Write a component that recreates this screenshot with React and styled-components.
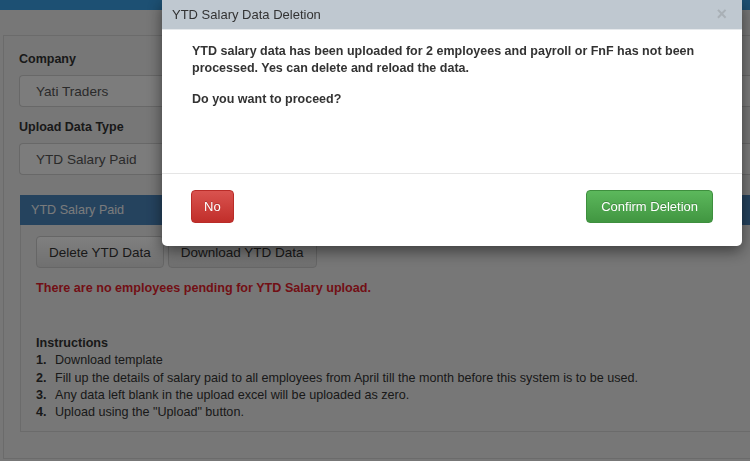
import styled, { createGlobalStyle } from 'styled-components';

const GlobalStyle = createGlobalStyle`
  html, body {
    margin: 0;
    padding: 0;
    height: 100%;
    overflow: hidden;
  }
  body {
    font-family: "Liberation Sans", Arial, sans-serif;
    font-size: 13px;
    color: #333;
    background: #efefef;
  }
`;

const TopBar = styled.div`
  height: 10px;
  background: #3aa0e6;
`;

const Page = styled.div`
  padding: 25px 0 0 3px;
`;

const Box = styled.div`
  border: 1px solid #d6d6d6;
  border-right: none;
  padding: 15px 0 26px 15px;
  display: flex;
  flex-direction: column;
`;

const Label = styled.label`
  font-weight: bold;
  font-size: 12.5px;
  line-height: 17px;
  margin-bottom: 7px;
`;

const Select = styled.div`
  box-sizing: border-box;
  height: 32px;
  border: 1px solid #d0d0d0;
  border-right: none;
  border-radius: 4px 0 0 4px;
  background: #f8f8f8;
  padding-left: 16px;
  display: flex;
  align-items: center;
  font-size: 13.6px;
  color: #555;
  margin-bottom: 12px;
`;

const Panel = styled.div`
  margin: 8px 0 0 1px;
  border: 1px solid #d6d6d6;
  border-right: none;
`;

const PanelHeading = styled.div`
  height: 30px;
  background: #4a86bd;
  color: #f4f6f8;
  font-size: 12.6px;
  display: flex;
  align-items: center;
  padding-left: 11px;
  margin: -1px 0 0 -1px;
`;

const PanelBody = styled.div`
  padding: 11px 15px 10px 15px;
`;

const ButtonRow = styled.div`
  display: flex;
  gap: 4px;
`;

const DefaultButton = styled.button`
  font-family: inherit;
  font-size: 13.5px;
  color: #333;
  height: 32px;
  padding: 0 12px;
  border: 1px solid #ccc;
  border-radius: 4px;
  background: linear-gradient(#ffffff, #e0e0e0);
`;

const ErrorText = styled.p`
  margin: 12px 0 0;
  color: #e41e2c;
  font-weight: bold;
  font-size: 12.6px;
  line-height: 17px;
`;

const Instructions = styled.div`
  margin-top: 38px;
  font-size: 12.6px;
  line-height: 17.3px;
`;

const InstructionsTitle = styled.div`
  font-weight: bold;
`;

const Step = styled.div`
  display: flex;
`;

const StepNum = styled.span`
  font-weight: bold;
  width: 19px;
`;

const Overlay = styled.div`
  position: fixed;
  inset: 0;
  background: rgba(0, 0, 0, 0.5);
`;

const Modal = styled.div`
  position: fixed;
  top: 0;
  left: 162px;
  width: 580px;
  background: #fff;
  border-radius: 0 0 5px 5px;
  box-shadow: 0 5px 15px rgba(0, 0, 0, 0.5);
  display: flex;
  flex-direction: column;
`;

const ModalHeader = styled.div`
  height: 29px;
  background: #bfc8d0;
  border-bottom: 1px solid #e6e9ec;
  display: flex;
  align-items: center;
  justify-content: space-between;
  padding: 0 15px 0 10px;
  font-size: 13px;
  color: #333;
`;

const Close = styled.span`
  font-size: 18px;
  font-weight: bold;
  color: #a9b0b6;
  line-height: 1;
  margin-top: -2px;
`;

const ModalBody = styled.div`
  height: 144px;
  padding: 13px 30px 0;
  font-weight: bold;
  font-size: 12.5px;
  line-height: 17px;
  box-sizing: border-box;
  border-bottom: 1px solid #e5e5e5;

  p {
    margin: 0 0 14px;
  }
`;

const ModalFooter = styled.div`
  display: flex;
  justify-content: space-between;
  padding: 16px 29px 23px;
`;

const ColorButton = styled.button`
  font-family: inherit;
  font-size: 13px;
  color: #fff;
  height: 33px;
  padding: 0 ${p => (p.$variant === 'danger' ? '12px' : '14px')};
  border-radius: 4px;
  border: 1px solid ${p => (p.$variant === 'danger' ? '#b92c28' : '#3e8f3e')};
  background: ${p =>
    p.$variant === 'danger'
      ? 'linear-gradient(#d9534f, #c12e2a)'
      : 'linear-gradient(#5cb85c, #419641)'};
  text-shadow: 0 -1px 0 rgba(0, 0, 0, 0.2);
`;

const steps = [
  'Download template',
  'Fill up the details of salary paid to all employees from April till the month before this system is to be used.',
  'Any data left blank in the upload excel will be uploaded as zero.',
  'Upload using the "Upload" button.',
];

export default function App() {
  return (
    <>
      <GlobalStyle />
      <TopBar />
      <Page>
        <Box>
          <Label>Company</Label>
          <Select>Yati Traders</Select>
          <Label>Upload Data Type</Label>
          <Select>YTD Salary Paid</Select>
          <Panel>
            <PanelHeading>YTD Salary Paid</PanelHeading>
            <PanelBody>
              <ButtonRow>
                <DefaultButton>Delete YTD Data</DefaultButton>
                <DefaultButton>Download YTD Data</DefaultButton>
              </ButtonRow>
              <ErrorText>There are no employees pending for YTD Salary upload.</ErrorText>
              <Instructions>
                <InstructionsTitle>Instructions</InstructionsTitle>
                {steps.map((s, i) => (
                  <Step key={i}>
                    <StepNum>{i + 1}.</StepNum>
                    <span>{s}</span>
                  </Step>
                ))}
              </Instructions>
            </PanelBody>
          </Panel>
        </Box>
      </Page>
      <Overlay />
      <Modal>
        <ModalHeader>
          <span>YTD Salary Data Deletion</span>
          <Close>×</Close>
        </ModalHeader>
        <ModalBody>
          <p>
            YTD salary data has been uploaded for 2 employees and payroll or FnF has not been
            processed. Yes can delete and reload the data.
          </p>
          <p>Do you want to proceed?</p>
        </ModalBody>
        <ModalFooter>
          <ColorButton $variant="danger">No</ColorButton>
          <ColorButton $variant="success">Confirm Deletion</ColorButton>
        </ModalFooter>
      </Modal>
    </>
  );
}
